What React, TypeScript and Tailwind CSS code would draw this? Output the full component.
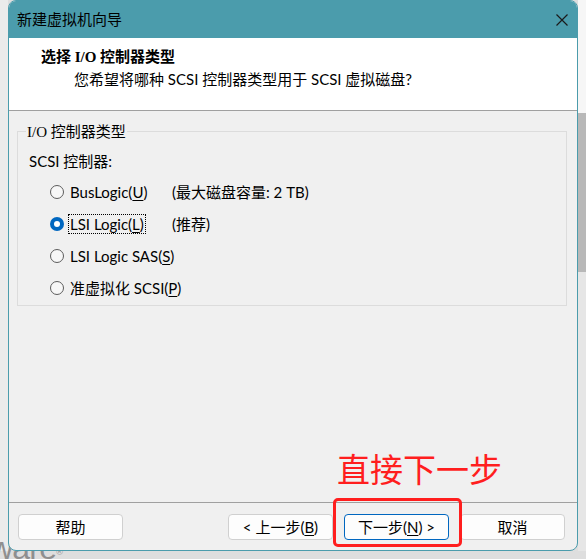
import React from 'react';

const sans = { fontFamily: 'Lato, "Noto Sans CJK SC", sans-serif' };

function Key({ children }: { children: React.ReactNode }) {
    return <span className="underline underline-offset-2">{children}</span>;
}

function Radio({ checked }: { checked?: boolean }) {
    if (checked) {
        return (
            <span className="flex h-[14px] w-[14px] shrink-0 items-center justify-center rounded-full bg-[#0067c0]">
                <span className="h-[6px] w-[6px] rounded-full bg-white" />
            </span>
        );
    }
    return <span className="h-[14px] w-[14px] shrink-0 rounded-full border border-[#5c5c5c] bg-[#f7f7f7]" />;
}

function Option({
    label,
    note,
    checked,
    focused,
}: {
    label: React.ReactNode;
    note?: string;
    checked?: boolean;
    focused?: boolean;
}) {
    return (
        <div className="flex h-[32px] items-center whitespace-nowrap pl-[21px]">
            <Radio checked={checked} />
            <div className="ml-[4px] min-w-[104px]">
                <span
                    className={
                        focused
                            ? 'border border-dotted border-black px-px leading-[18px]'
                            : 'border border-transparent px-px leading-[18px]'
                    }
                >
                    {label}
                </span>
            </div>
            {note && <span>{note}</span>}
        </div>
    );
}

function WinButton({ children, primary }: { children: React.ReactNode; primary?: boolean }) {
    return (
        <button
            className={
                primary
                    ? 'h-[26px] w-[105px] whitespace-nowrap rounded-[4px] border border-[#0067c0] bg-[#fdfdfd] text-[15px] text-black'
                    : 'h-[26px] w-[105px] whitespace-nowrap rounded-[4px] border border-[#d0d0d0] bg-[#fdfdfd] text-[15px] text-black'
            }
        >
            {children}
        </button>
    );
}

export default function App() {
    return (
        <div className="relative flex h-[559px] w-[586px] items-start overflow-hidden bg-[#dedede]" style={sans}>
            {/* desktop behind the dialog */}
            <span
                className="absolute left-[-10px] top-[532px] text-[32px] leading-none tracking-tight text-[#8f8f8f]"
                style={{ fontFamily: '"Liberation Sans", sans-serif' }}
            >
                ware<sup className="text-[9px]">®</sup>
            </span>
            <div className="h-[551px] w-[8px] bg-[#ebebeb]" />

            <div className="relative z-10 flex h-[551px] w-[570px] flex-col overflow-hidden rounded-[8px] border border-[#4b9cac] bg-[#f0f0f0] text-[15px] text-black">
                <div className="flex h-[37px] items-center justify-between bg-[#4b9cac] pl-[8px] pr-[8px]">
                    <span>新建虚拟机向导</span>
                    <svg width="12" height="12" viewBox="0 0 12 12" className="mr-[1px]">
                        <path d="M0.5 0.5 L11.5 11.5 M11.5 0.5 L0.5 11.5" stroke="#1a1a1a" strokeWidth="1.2" />
                    </svg>
                </div>

                <div className="h-[73px] whitespace-nowrap border-b border-[#a0a0a0] bg-white pt-[8px]">
                    <div className="pl-[32px] font-bold leading-[20px]">
                        选择 <span style={{ fontFamily: '"Liberation Serif", serif' }}>I/O</span> 控制器类型
                    </div>
                    <div className="mt-[2px] pl-[65px] leading-[20px]">
                        您希望将哪种 SCSI 控制器类型用于 SCSI 虚拟磁盘?
                    </div>
                </div>

                <div className="flex-1 pt-[10px]">
                    <fieldset className="ml-[8px] mr-[10px] border border-[#dcdcdc] px-[8px] pb-[1px]">
                        <legend className="px-[1px] leading-[20px]">
                            <span style={{ fontFamily: '"Liberation Serif", serif' }}>I/O</span> 控制器类型
                        </legend>
                        <div className="ml-[3px] mt-[9px] leading-[20px]">SCSI 控制器:</div>
                        <div className="ml-[3px] mt-[5px]">
                            <Option label={<>BusLogic(<Key>U</Key>)</>} note="(最大磁盘容量: 2 TB)" />
                            <Option label={<>LSI Logic(<Key>L</Key>)</>} note="(推荐)" checked focused />
                            <Option label={<>LSI Logic SAS(<Key>S</Key>)</>} />
                            <Option label={<>准虚拟化 SCSI(<Key>P</Key>)</>} />
                        </div>
                    </fieldset>
                </div>

                <div className="flex h-[48px] items-start border-t border-[#a0a0a0] pl-[9px] pr-[12px] pt-[11px]">
                    <WinButton>帮助</WinButton>
                    <div className="flex flex-1 justify-end gap-[11px]">
                        <WinButton>&lt; 上一步(<Key>B</Key>)</WinButton>
                        <WinButton primary>下一步(<Key>N</Key>) &gt;</WinButton>
                        <WinButton>取消</WinButton>
                    </div>
                </div>
            </div>

            <div className="flex h-[551px] w-[8px] flex-col">
                <div className="h-[113px] bg-[#f6f6f6]" />
                <div className="h-[159px] bg-[#b8b8b8]" />
                <div className="flex-1 bg-[#e6e6e6]" />
            </div>

            {/* red annotation */}
            <div
                className="absolute left-[337px] top-[452px] z-20 text-[33px] leading-none text-[#ff1e1e]"
                style={{ fontFamily: '"Noto Sans CJK SC", sans-serif' }}
            >
                直接下一步
            </div>
            <div className="absolute left-[333px] top-[498px] z-20 h-[49px] w-[129px] rounded-[5px] border-[3px] border-[#ff1e1e]" />
        </div>
    );
}
